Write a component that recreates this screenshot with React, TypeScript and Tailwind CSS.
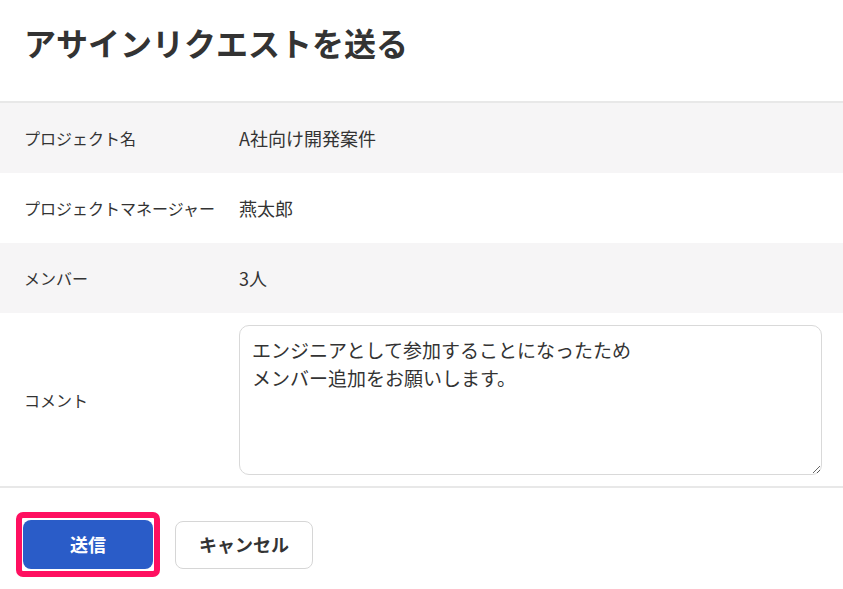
import React from "react";

const rows: { label: string; value: string; gray: boolean }[] = [
  { label: "プロジェクト名", value: "A社向け開発案件", gray: true },
  { label: "プロジェクトマネージャー", value: "燕太郎", gray: false },
  { label: "メンバー", value: "3人", gray: true },
];

export default function App() {
  return (
    <div
      className="w-[843px] h-[589px] bg-white text-[#333333] overflow-hidden"
      style={{ fontFamily: '"Noto Sans CJK JP", "Noto Sans", sans-serif' }}
    >
      <div className="h-[101px] px-[24px] pt-[18px]">
        <h1 className="text-[32px] leading-[48px] font-bold tracking-normal">
          アサインリクエストを送る
        </h1>
      </div>
      <div className="border-t-2 border-b-2 border-[#e8e8e8]">
        {rows.map((r) => (
          <div
            key={r.label}
            className={`flex items-center h-[70px] pl-[24px] pr-[21px] ${
              r.gray ? "bg-[#f6f5f6]" : "bg-white"
            }`}
          >
            <div className="w-[215px] shrink-0 text-[16px] leading-[24px]">{r.label}</div>
            <div className="text-[18px] leading-[27px]">{r.value}</div>
          </div>
        ))}
        <div className="flex items-center h-[173px] pl-[24px] pr-[21px] bg-white">
          <div className="w-[215px] shrink-0 text-[16px] leading-[24px]">コメント</div>
          <textarea
            className="flex-1 h-[150px] border border-[#d9d9d9] rounded-[10px] px-[12px] py-[10px] text-[19px] leading-[28.8px] text-[#333333] outline-none resize-y"
            style={{ fontFamily: '"Noto Sans CJK JP", "Noto Sans", sans-serif' }}
            defaultValue={"エンジニアとして参加することになったため\nメンバー追加をお願いします。"}
          />
        </div>
      </div>
      <div className="flex items-center gap-[15px] pl-[16px] pt-[24px]">
        <div className="border-[6px] border-[#ff1060] rounded-[7px] bg-white px-px py-[2px]">
          <button className="w-[130px] h-[49px] rounded-[8px] bg-[#2a5cc8] text-white text-[18px] font-bold">
            送信
          </button>
        </div>
        <button className="w-[138px] h-[48px] rounded-[8px] border border-[#d6d6d6] bg-white text-[#333333] text-[18px] font-bold">
          キャンセル
        </button>
      </div>
    </div>
  );
}
